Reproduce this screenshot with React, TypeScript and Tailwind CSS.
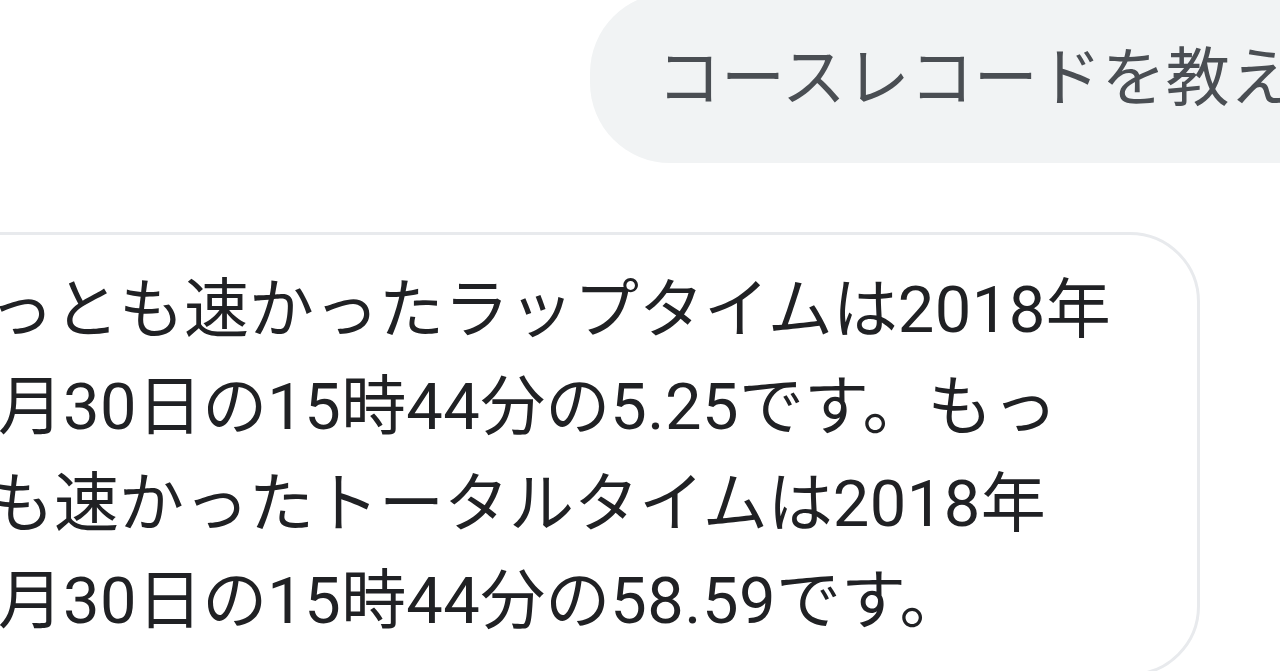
import React from "react";

const font = "font-['Roboto','Noto_Sans_CJK_JP',sans-serif]";

const botLines = [
  "もっとも速かったラップタイムは2018年",
  "12月30日の15時44分の5.25です。もっ",
  "とも速かったトータルタイムは2018年",
  "12月30日の15時44分の58.59です。",
];

// digits in the screenshot sit a little wider apart than Roboto's defaults
function Line({ text }: { text: string }) {
  const parts = text.split(/([\d.]+)/);
  return (
    <div className="whitespace-nowrap text-[65px] leading-[97px] text-[#202124]">
      {parts.map((p, i) =>
        /^[\d.]+$/.test(p) ? (
          <span key={i} className="tracking-[0.5px]">
            {p}
          </span>
        ) : (
          <span key={i}>{p}</span>
        )
      )}
    </div>
  );
}

export default function App() {
  return (
    <div className={`h-[671px] w-[1280px] overflow-hidden bg-white ${font}`}>
      {/* user message */}
      <div className="-mt-[7px] flex pl-[590px]">
        <div className="flex h-[170px] w-[900px] shrink-0 items-center rounded-l-[80px] bg-[#f1f3f4] pl-[67px]">
          <span className="whitespace-nowrap text-[64px] leading-[97px] text-[#4a4e53]">
            コースレコードを教えて
          </span>
        </div>
      </div>

      {/* assistant reply */}
      <div className="mt-[69px] -ml-[138px] w-[1338px] rounded-[70px] border-[3px] border-[#e8eaed] bg-white pt-[27px] pb-[23px] pl-[59px]">
        {botLines.map((line, i) => (
          <Line key={i} text={line} />
        ))}
      </div>
    </div>
  );
}
